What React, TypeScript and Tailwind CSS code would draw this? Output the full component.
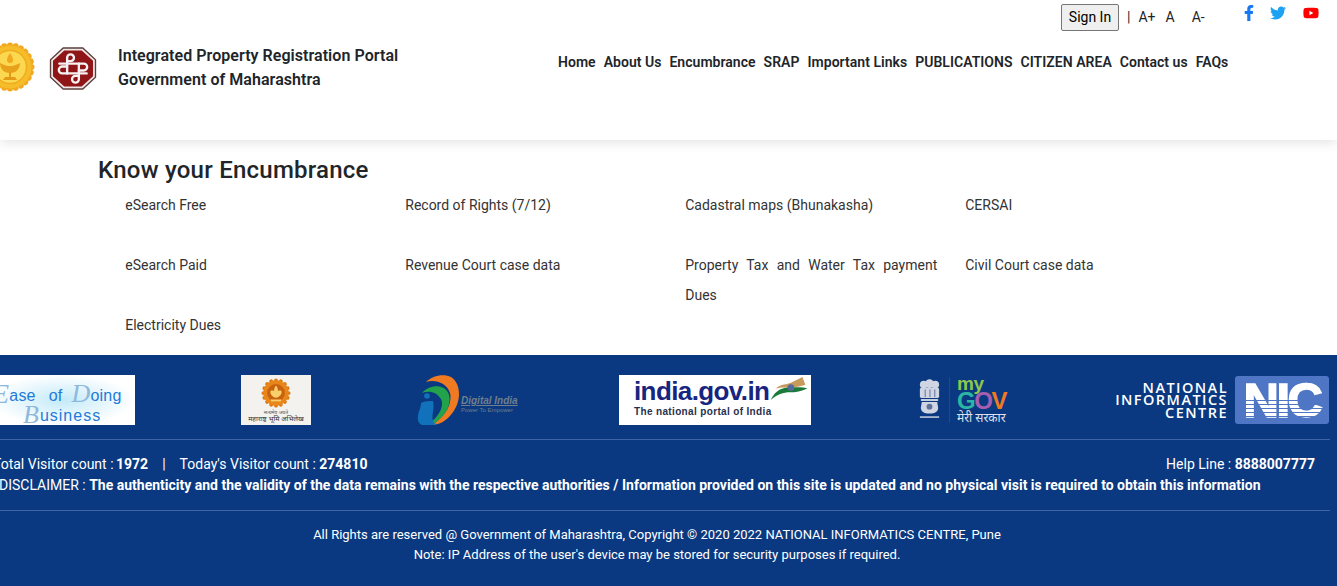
import { FaFacebookF, FaTwitter, FaYoutube } from "react-icons/fa";

const navItems = [
  "Home",
  "About Us",
  "Encumbrance",
  "SRAP",
  "Important Links",
  "PUBLICATIONS",
  "CITIZEN AREA",
  "Contact us",
  "FAQs",
];

function StateEmblem() {
  const petals = Array.from({ length: 24 }, (_, i) => (i * 360) / 24);
  return (
    <svg viewBox="0 0 50 50" className="h-[50px] w-[50px] shrink-0">
      {petals.map((a) => (
        <circle key={a} cx="25" cy="3.500" r="3" fill="#f2a91f" transform={`rotate(${a} 25 25)`} />
      ))}
      <circle cx="25" cy="25" r="21.500" fill="#f6bd2a" />
      <circle cx="25" cy="25" r="16.500" fill="#fbd84f" stroke="#f0ac1f" strokeWidth="1.500" />
      <path d="M15 21c3 1 5 3 10 3s7-2 10-3c0 6-4 10-10 10s-10-4-10-10z" fill="#e8a11a" />
      <path d="M25 11c2 3 3 5 3 7s-1 3-3 3-3-1-3-3 1-4 3-7z" fill="#f2a81e" />
      <path d="M24 30h2v5h4l2 3H18l2-3h4z" fill="#e39a16" />
    </svg>
  );
}

function KnotLogo() {
  return (
    <svg viewBox="0 0 48 44" className="h-[43px] w-[48px] shrink-0">
      <path d="M14 1h20l13 12v18L34 43H14L1 31V13z" fill="#f1e9e8" stroke="#5c3f3d" strokeWidth="1.400" />
      <path d="M15 3.500h18L44.500 14v16L33 40.500H15L3.500 30V14z" fill="#8f1517" />
      <g fill="none" stroke="#f7f2f2" strokeWidth="2.400" strokeLinecap="round" strokeLinejoin="round">
        <path d="M18 27V11a3.500 3.500 0 0 1 7 0a3.500 3.500 0 0 1-3.500 3.500H18" />
        <path d="M38 27H13a3.500 3.500 0 0 1 0-7h5" />
        <path d="M30 17v16a3.500 3.500 0 0 1-7 0a3.500 3.500 0 0 1 3.500-3.500H30" />
        <path d="M10 17h25a3.500 3.500 0 0 1 0 7h-5" />
      </g>
    </svg>
  );
}

function EaseLogo() {
  return (
    <div className="flex h-[50px] w-[145px] shrink-0 flex-col bg-[radial-gradient(ellipse_at_center,#c3eaf8_0%,#ffffff_72%)] pt-[6px] font-['Liberation_Sans',sans-serif] text-[#1f7ad8]">
      <div className="flex h-[26px] items-end whitespace-nowrap pl-[2px] text-[16px] leading-[22px] tracking-[0.2px]">
        <span className="font-['Liberation_Serif',serif] text-[28px] leading-[26px] italic text-[#8fb8dc]">E</span>
        <span>ase</span>
        <span className="ml-[13px]">of</span>
        <span className="ml-[9px] font-['Liberation_Serif',serif] text-[26px] leading-[26px] italic text-[#8fb8dc]">D</span>
        <span>oing</span>
      </div>
      <div className="flex h-[19px] items-end whitespace-nowrap pl-[33px] text-[16px] leading-[20px] tracking-[1px]">
        <span className="font-['Liberation_Serif',serif] text-[26px] leading-[22px] italic text-[#8fb8dc]">B</span>
        <span>usiness</span>
      </div>
    </div>
  );
}

function MahaLogo() {
  const petals = Array.from({ length: 16 }, (_, i) => (i * 360) / 16);
  return (
    <div className="flex h-[50px] w-[70px] shrink-0 flex-col items-center bg-[#f4f2ee] pt-[3px]">
      <svg viewBox="0 0 32 32" className="h-[30px] w-[30px]">
        {petals.map((a) => (
          <circle key={a} cx="16" cy="2.500" r="2" fill="#dd7a12" transform={`rotate(${a} 16 16)`} />
        ))}
        <circle cx="16" cy="16" r="13.500" fill="#e8861a" />
        <circle cx="16" cy="16" r="9.500" fill="#c9620f" />
        <path d="M16 8c1.500 2 2 3.500 2 5s4-1 4 2-3 6-6 6-6-3-6-6 4-.5 4-2 .5-3 2-5z" fill="#f8cf6a" />
        <path d="M10 23h12l-1 2H11z" fill="#f8cf6a" />
      </svg>
      <span className="mt-[1px] font-['Noto_Sans',sans-serif] text-[5px] leading-[6px] text-[#555]">सत्यमेव जयते</span>
      <span className="whitespace-nowrap font-['Noto_Sans',sans-serif] text-[7px] leading-[8px] text-[#333]">महाराष्ट्र भूमि अभिलेख</span>
    </div>
  );
}

function DigitalIndiaLogo() {
  return (
    <div className="flex h-[50px] w-[97px] shrink-0 items-center">
      <svg viewBox="0 0 44 50" className="h-[50px] w-[44px] shrink-0">
        <path d="M9 7C15 1 26-2 34 2c10 6 12 26-2 40-6 6-12 8-18 8 12-6 22-20 19-32C30 8 18 4 9 7z" fill="#f07a22" />
        <path d="M5 18c6-7 19-10 25-2 6 8 2 22-12 32-4 2-6 2-8 2 10-6 18-18 14-26-4-7-12-9-19-6z" fill="#22a24a" />
        <path d="M4 28c4-2 8-2 12-2 2 8-2 14 0 20 1 2 2 3 4 3-8 3-18 3-19-4-1-7 3-11 3-17z" fill="#1172bb" />
        <circle cx="10" cy="21" r="2.800" fill="#1172bb" />
      </svg>
      <div className="mt-[9px] flex flex-col whitespace-nowrap font-['Liberation_Sans',sans-serif] italic leading-none text-[#6f7f8c]">
        <span className="text-[10px] font-bold underline">Digital India</span>
        <span className="mt-[1px] text-[6px] not-italic">Power To Empower</span>
      </div>
    </div>
  );
}

function IndiaGovLogo() {
  return (
    <div className="flex h-[50px] w-[192px] shrink-0 flex-col bg-white pl-[15px] pt-[1px] font-['Liberation_Sans',sans-serif]">
      <div className="flex h-[30px] items-center">
        <span className="text-[26px] font-bold leading-none tracking-[-0.6px] text-[#17257f]">india.gov.in</span>
        <svg viewBox="0 0 40 26" className="-mt-[5px] h-[25px] w-[40px] shrink-0">
          <path d="M1 25C6 14 14 12 20 12c7 0 13-1 19 1-6 3-12 4-18 4-7 0-13 2-20 8z" fill="#1b7a3a" />
          <path d="M6 13C12 8 18 9 22 7l12-6 3 8c-6 2-13 3-17 3-6 0-10 0-14 1z" fill="#c99a5e" />
          <circle cx="22" cy="12" r="3.500" fill="#566a9a" />
        </svg>
      </div>
      <span className="mt-[1px] text-[10px] font-bold leading-none tracking-[0.35px] text-[#27304d]">The national portal of India</span>
    </div>
  );
}

function MyGovLogo() {
  return (
    <div className="flex h-[50px] w-[91px] shrink-0 items-center">
      <svg viewBox="0 0 26 46" className="h-[46px] w-[25px] shrink-0">
        <g fill="#cfd5e2">
          <circle cx="7" cy="7" r="4" />
          <circle cx="13" cy="6" r="4.500" />
          <circle cx="19" cy="7" r="4" />
          <rect x="3" y="10" width="20" height="11" rx="2" />
          <rect x="4" y="22" width="18" height="2" />
          <path d="M5 25h16l1 6c0 4-3 6-9 6s-9-2-9-6z" />
          <rect x="3" y="40" width="20" height="1.500" />
        </g>
        <g fill="#5f7099">
          <rect x="8" y="12" width="1" height="8" />
          <rect x="13" y="12" width="1" height="8" />
          <rect x="18" y="12" width="1" height="8" />
          <circle cx="13" cy="30" r="3" />
        </g>
      </svg>
      <div className="ml-[7px] h-[46px] w-[1px] bg-[#1f4a8d]" />
      <div className="ml-[7px] flex flex-col font-['Liberation_Sans',sans-serif] leading-none">
        <span className="text-[19px] font-bold leading-[14px] tracking-[-0.5px] text-[#8cc84b]">my</span>
        <span className="whitespace-nowrap text-[24px] font-bold leading-[19px] tracking-[-1.400px]">
          <span className="text-[#2bb6a3]">G</span>
          <span className="text-[#a65fb0]">O</span>
          <span className="text-[#f07a22]">V</span>
        </span>
        <span className="mt-[1px] whitespace-nowrap font-['Noto_Sans',sans-serif] text-[12px] leading-[13px] text-[#dde3ee]">मेरी सरकार</span>
      </div>
    </div>
  );
}

function NicLogo() {
  return (
    <div className="flex h-[50px] w-[215px] shrink-0 items-center">
      <div className="flex w-[114px] flex-col items-end pt-[1px] font-['Open_Sans',sans-serif] text-[14.500px] font-semibold leading-[12.500px] tracking-[1.450px] text-white">
        <span>NATIONAL</span>
        <span>INFORMATICS</span>
        <span>CENTRE</span>
      </div>
      <div className="relative ml-[7px] flex h-[48px] w-[94px] items-center justify-center rounded-[3px] bg-[#4f76c4] font-['Liberation_Sans',sans-serif]">
        <span className="text-[49px] font-bold leading-none tracking-[-2.500px] text-white [-webkit-text-stroke:1.5px_white]">NIC</span>
        <div className="absolute inset-x-0 top-[24px] h-[18px] bg-[repeating-linear-gradient(to_bottom,#4f76c4_0,#4f76c4_1px,transparent_1px,transparent_4px)]" />
      </div>
    </div>
  );
}

function App() {
  return (
    <div className="h-[586px] w-full overflow-hidden bg-white font-['Roboto',sans-serif] text-[14px] text-[#212529]">
      <header className="relative flex h-[140px] w-full shadow-[0_2px_12px_rgba(0,0,0,0.12)]">
        <div className="-ml-[16px] mt-[42px] flex h-[50px] w-[574px] shrink-0 items-start">
          <div className="ml-[1px]">
            <StateEmblem />
          </div>
          <div className="ml-[14px] mt-[5px]">
            <KnotLogo />
          </div>
          <div className="ml-[21px] mt-[2px] text-[16px] font-semibold leading-[24px] tracking-[0.05px]">
            <div>Integrated Property Registration Portal</div>
            <div>Government of Maharashtra</div>
          </div>
        </div>
        <div className="flex flex-1 flex-col">
          <div className="flex h-[32px] items-start pt-[4px]">
            <button className="ml-[503px] h-[27px] w-[58px] rounded-[2px] border border-[#767676] bg-[#efefef] text-[14px] text-black">
              Sign In
            </button>
          </div>
          <nav className="mt-[20px] flex gap-[8px] whitespace-nowrap text-[14px] font-semibold leading-[21px] tracking-[0.03px]">
            {navItems.map((item) => (
              <span key={item}>{item}</span>
            ))}
          </nav>
        </div>
        <div className="absolute left-[1127px] top-[8px] flex items-center text-[14px] leading-[19px] text-[#212529]">
          <span>|</span>
          <span className="ml-[8px]">A+</span>
          <span className="ml-[10px]">A</span>
          <span className="ml-[17px]">A-</span>
          <span className="ml-[36px] -mt-[9px] text-[16px] text-[#1877f2]">
            <FaFacebookF />
          </span>
          <span className="ml-[13px] -mt-[9px] text-[16px] text-[#1da1f2]">
            <FaTwitter />
          </span>
          <span className="ml-[17px] -mt-[9px] text-[16px] text-[#ff0000]">
            <FaYoutube />
          </span>
        </div>
      </header>

      <main className="h-[215px] pl-[98px]">
        <h2 className="pt-[16px] text-[24px] font-medium leading-[29px] tracking-[0.24px]">Know your Encumbrance</h2>
        <div className="mt-[5px] grid w-[1120px] grid-cols-[280px_280px_280px_280px] pl-[27.250px] text-[14px] leading-[30px] text-[#333]">
          <div className="h-[60px]">eSearch Free</div>
          <div className="h-[60px]">Record of Rights (7/12)</div>
          <div className="h-[60px]">Cadastral maps (Bhunakasha)</div>
          <div className="h-[60px]">CERSAI</div>
          <div className="h-[60px]">eSearch Paid</div>
          <div className="h-[60px]">Revenue Court case data</div>
          <div className="h-[60px] w-[252px] text-justify">Property Tax and Water Tax payment Dues</div>
          <div className="h-[60px]">Civil Court case data</div>
          <div>Electricity Dues</div>
        </div>
      </main>

      <footer className="h-[231px] overflow-hidden bg-[#0a3981] text-white">
        <div className="-ml-[10px] flex gap-[106px] pt-[20px]">
          <EaseLogo />
          <MahaLogo />
          <DigitalIndiaLogo />
          <div className="-ml-[1px]">
            <IndiaGovLogo />
          </div>
          <MyGovLogo />
          <NicLogo />
        </div>
        <div className="mt-[14px] h-[1px] w-[1330px] bg-[#3f64a3]" />
        <div className="-ml-[7px] mt-[14px] flex w-[1322px] justify-between text-[14px] leading-[21px]">
          <div className="flex whitespace-pre">
            <span>Total Visitor count : <b className="-ml-[1px]">1972</b></span>
            <span className="ml-[14px]">|</span>
            <span className="ml-[14px]">Today's Visitor count : <b>274810</b></span>
          </div>
          <div>
            Help Line : <b>8888007777</b>
          </div>
        </div>
        <div className="-ml-[1px] whitespace-nowrap text-[14px] leading-[21px]">
          DISCLAIMER : <b>The authenticity and the validity of the data remains with the respective authorities / Information provided on this site is updated and no physical visit is required to obtain this information</b>
        </div>
        <div className="mt-[14px] h-[1px] w-[1330px] bg-[#3f64a3]" />
        <div className="mt-[14px] w-[1314px] text-center text-[13px] leading-[20px]">
          <div>All Rights are reserved @ Government of Maharashtra, Copyright © 2020 2022 NATIONAL INFORMATICS CENTRE, Pune</div>
          <div>Note: IP Address of the user's device may be stored for security purposes if required.</div>
        </div>
      </footer>
    </div>
  );
}

export default App;
